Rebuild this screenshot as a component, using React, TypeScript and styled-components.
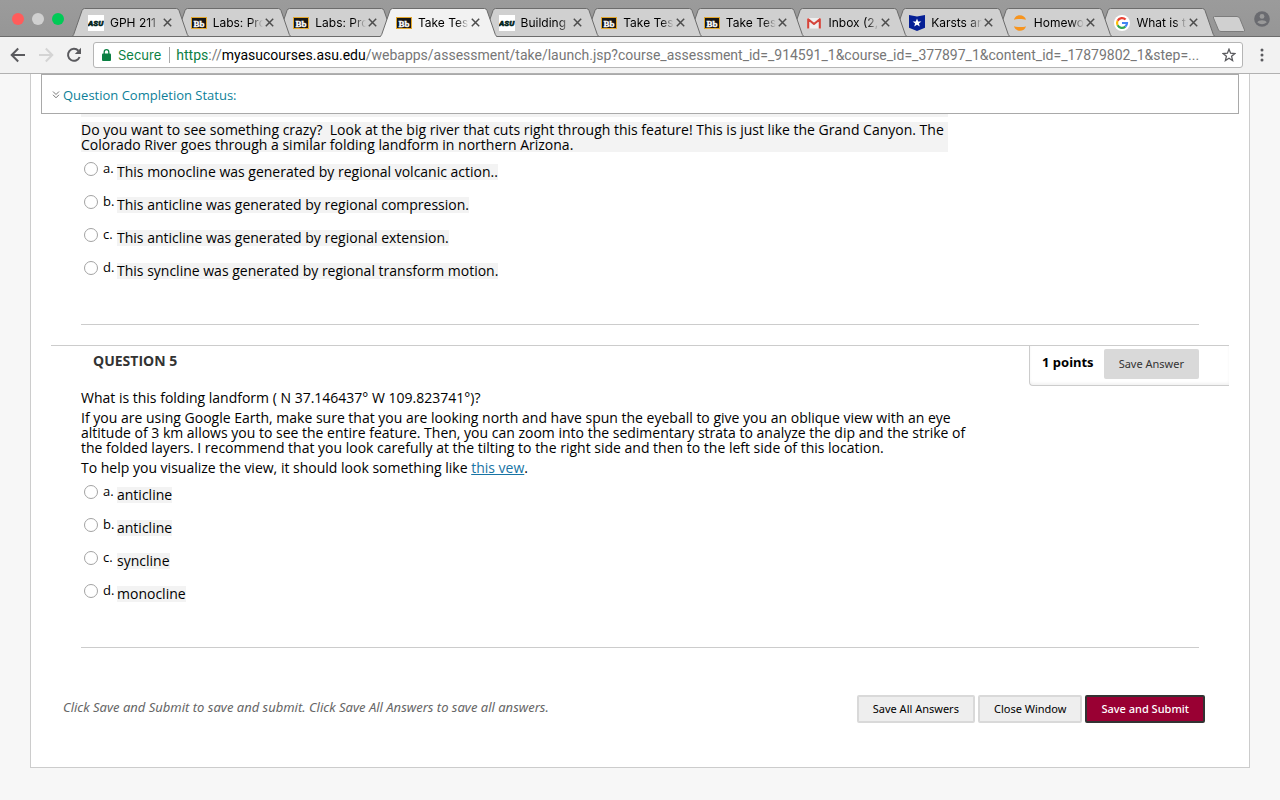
import React from "react";
import styled, { createGlobalStyle } from "styled-components";

const Global = createGlobalStyle`
  * { box-sizing: border-box; }
  body {
    margin: 0;
    background: #f7f7f7;
    color: #000;
    font-family: "Open Sans", "Noto Sans", sans-serif;
    font-size: 14px;
  }
  button { font-family: "Noto Sans", sans-serif; cursor: pointer; }
`;

const ui = `"Inter", "Roboto", sans-serif`;

/* ---------- Browser frame ---------- */

const TabStrip = styled.header`
  display: flex;
  align-items: flex-end;
  height: 37px;
  padding: 0 10px 0 12px;
  background: linear-gradient(#9b9b9b, #969696);
  box-shadow: inset 0 -1px 0 #6c6c6c;
  font-family: ${ui};
`;

const WindowButtons = styled.div`
  display: flex;
  gap: 8px;
  height: 37px;
  padding-top: 13px;
  margin-right: 8px;
  flex: none;
`;

const Dot = styled.button<{ $color: string }>`
  width: 12px;
  height: 12px;
  padding: 0;
  border: 0;
  border-radius: 50%;
  background: ${(p) => p.$color};
`;

const TabList = styled.nav`
  display: flex;
  flex: 1;
  min-width: 0;
`;

const TabItem = styled.div<{ $active?: boolean; $level: number }>`
  display: flex;
  position: relative;
  z-index: ${(p) => p.$level};
  flex: 1 1 0;
  min-width: 0;
  height: 29px;
  color: ${(p) => (p.$active ? "#f2f2f2" : "#d0d0d0")};
  &:not(:first-child) { margin-left: -14px; }
`;

const Edge = styled.svg`
  display: block;
  flex: none;
  width: 14px;
  height: 29px;
`;

const TabBody = styled.div<{ $active?: boolean }>`
  display: flex;
  align-items: center;
  flex: 1;
  min-width: 0;
  padding: 0 3px 0 2px;
  background: currentColor;
  border-top: 1px solid #6c6c6c;
  border-bottom: 1px solid ${(p) => (p.$active ? "#f2f2f2" : "#6c6c6c")};
`;

const Favicon = styled.svg`
  flex: none;
  width: 16px;
  height: 16px;
`;

const TabTitle = styled.a`
  flex: 1;
  min-width: 0;
  margin: 0 2px 0 6px;
  overflow: hidden;
  white-space: nowrap;
  color: #000;
  font-size: 12px;
  line-height: 18px;
  text-decoration: none;
  mask-image: linear-gradient(to right, #000 75%, transparent 100%);
`;

const IconButton = styled.button`
  display: flex;
  flex: none;
  padding: 0;
  border: 0;
  background: none;
`;

const NewTab = styled(IconButton)`
  align-self: flex-start;
  padding-top: 16px;
  margin-left: -3px;
`;

const Profile = styled(IconButton)`
  align-self: flex-start;
  padding-top: 11px;
  margin-left: 8px;
`;

const Toolbar = styled.div`
  display: flex;
  align-items: center;
  height: 37px;
  padding: 0 13px 0 10px;
  background: #f2f2f2;
  border-bottom: 1px solid #b1b1b1;
`;

const NavButtons = styled.div`
  display: flex;
  gap: 12px;
  margin-right: 11px;
`;

const AddressBar = styled.div`
  display: flex;
  align-items: center;
  flex: 1;
  min-width: 0;
  height: 26px;
  padding: 0 6px 0 8px;
  margin-right: 15px;
  background: #fff;
  border: 1px solid #b5b5b5;
  border-radius: 3px;
  font-family: "Roboto", sans-serif;
  font-size: 14px;
  line-height: 20px;
`;

const Secure = styled.span`
  flex: none;
  padding: 0 8px 0 7px;
  margin-right: 6px;
  border-right: 1px solid #aaa;
  color: #0b8043;
  font-family: ${ui};
  font-size: 13px;
  line-height: 16px;
`;

const Url = styled.div`
  flex: 1;
  min-width: 0;
  margin-right: 10px;
  overflow: hidden;
  white-space: nowrap;
  text-overflow: ellipsis;
  color: #777;
`;

const Scheme = styled.span`color: #0b8043;`;
const Host = styled.span`color: #000;`;

/* ---------- Assessment page ---------- */

const Panel = styled.main`
  margin: 0 30px 32px;
  padding: 0 10px 44px;
  background: #fff;
  border: 1px solid #ccc;
  border-top: 0;
`;

const StatusBar = styled.div`
  display: flex;
  align-items: center;
  height: 40px;
  padding: 2px 10px 0;
  border: 1px solid #a9a9a9;
  background: #fff;
`;

const StatusToggle = styled.button`
  display: flex;
  align-items: center;
  gap: 3px;
  padding: 0;
  border: 0;
  background: none;
  color: #0d7f99;
  font-family: "Open Sans", sans-serif;
  font-size: 13px;
  line-height: 18px;
`;

const QuestionBody = styled.div`
  padding: 0 30px 0 40px;
  margin-right: 10px;
`;

const ScrolledLine = styled.div`
  max-width: 867px;
  height: 3px;
  margin-bottom: 5px;
  background: #f3f3f3;
`;

const Text = styled.p`
  max-width: 900px;
  margin: 0 0 5px;
  line-height: 15px;
  &:last-of-type { margin-bottom: 0; }
`;

const ShadedText = styled(Text)`
  max-width: 867px;
  background: #f3f3f3;
`;

const TextLink = styled.a`color: #1874a4;`;

const Answers = styled.ul`
  margin: 0;
  padding: 10px 0 0;
  list-style: none;
`;

const Answer = styled.li`
  display: flex;
  align-items: flex-start;
  height: 33px;
`;

const Radio = styled.input`
  appearance: none;
  flex: none;
  width: 14px;
  height: 14px;
  margin: 0 5px 0 3px;
  border: 1px solid #a3a3a3;
  border-radius: 50%;
  background: #fff;
`;

const Letter = styled.span`
  flex: none;
  width: 14px;
  font-size: 13px;
  line-height: 12px;
`;

const Choice = styled.label`
  margin-top: 2px;
  background: #f3f3f3;
  line-height: 16px;
`;

const Rule = styled.hr`
  height: 1px;
  margin: 30px 0 20px;
  border: 0;
  background: #ccc;
`;

const QuestionHead = styled.div`
  display: flex;
  justify-content: space-between;
  align-items: flex-start;
  margin: 0 10px 4px;
  border-top: 1px solid #ccc;
`;

const QuestionTitle = styled.h3`
  margin: 6px 0 0 42px;
  color: #333;
  font-size: 14px;
  line-height: 18px;
`;

const Points = styled.div`
  display: flex;
  align-items: flex-start;
  gap: 10px;
  height: 40px;
  padding: 3px 30px 0 12px;
  border: solid #ccc;
  border-width: 0 0 1px 1px;
  border-bottom-left-radius: 4px;
  box-shadow: inset 0 -2px 3px #f3f3f3;
  font-family: "Noto Sans", sans-serif;
  font-size: 13px;
  font-weight: 700;
  line-height: 26px;
`;

const SaveAnswer = styled.button`
  height: 30px;
  padding: 0 15px 2px;
  border: 0;
  border-radius: 2px;
  background: #d9d9d9;
  color: #333;
  font-size: 11px;
`;

const Footer = styled.div`
  display: flex;
  align-items: center;
  justify-content: space-between;
  margin: 47px 34px 0 22px;
`;

const Hint = styled.p`
  margin: 0 0 4px;
  color: #666;
  font-family: "Noto Sans", sans-serif;
  font-size: 13px;
  font-style: italic;
  line-height: 20px;
`;

const Actions = styled.div`
  display: flex;
  gap: 3px;
`;

const Action = styled.button<{ $primary?: boolean }>`
  height: 28px;
  padding: 0 14px 2px;
  border: 2px solid ${(p) => (p.$primary ? "#333" : "#d9d9d9")};
  border-radius: 2px;
  background: ${(p) => (p.$primary ? "#990033" : "#eee")};
  color: ${(p) => (p.$primary ? "#fff" : "#000")};
  font-size: 11px;
  font-weight: ${(p) => (p.$primary ? 500 : 400)};
  white-space: nowrap;
`;

/* ---------- Favicons ---------- */

const Asu = () => (
  <Favicon viewBox="0 0 16 16">
    <rect width="16" height="16" fill="#fff" />
    <text x="0" y="11" fontSize="8" fontWeight="900" fontStyle="italic" fontFamily="Roboto, sans-serif" fill="#00231a" stroke="#00231a" strokeWidth=".5">ASU</text>
  </Favicon>
);
const Bb = () => (
  <Favicon viewBox="0 0 16 16">
    <rect x=".5" y="2.5" width="15" height="11" fill="#161616" stroke="#e3a72b" />
    <text x="2.5" y="11.5" fontSize="9" fontWeight="700" fontFamily="Liberation Serif, serif" fill="#fff" stroke="#fff" strokeWidth=".3">Bb</text>
  </Favicon>
);
const Gmail = () => (
  <Favicon viewBox="0 0 16 16">
    <rect x="1.5" y="3" width="13" height="10.5" fill="#efefef" />
    <path d="M2.2 13.6V4.2L8 9l5.8-4.8v9.4" fill="none" stroke="#d5443a" strokeWidth="2.1" strokeLinejoin="round" />
  </Favicon>
);
const Shield = () => (
  <Favicon viewBox="0 0 16 16">
    <path d="M0 0l8 1.6L16 0v12.8L8 16l-8-3.2z" fill="#051f95" />
    <path d="M8 3.4l1.2 3h3.2L9.9 8.4l.9 3.2L8 9.7l-2.8 1.9.9-3.2-2.5-2h3.2z" fill="#fff" />
  </Favicon>
);
const Jupyter = () => (
  <Favicon viewBox="0 0 16 16">
    <path d="M2 4.8C3.4-1.2 12.6-1.2 14 4.8 10.8 3.6 5.2 3.6 2 4.8z M2 11.2C3.4 17.2 12.6 17.2 14 11.2 10.8 12.4 5.2 12.4 2 11.2z" fill="#f7941e" />
  </Favicon>
);
const Google = () => (
  <Favicon viewBox="0 0 16 16">
    <circle cx="8" cy="8" r="8" fill="#fff" />
    <g fill="none" strokeWidth="2.2">
      <path d="M11.6 4.6A5 5 0 0 0 3.6 5.7" stroke="#ea4335" />
      <path d="M3.6 5.7a5 5 0 0 0 0 4.6" stroke="#fbbc05" />
      <path d="M3.6 10.3a5 5 0 0 0 7.7 1.4" stroke="#34a853" />
      <path d="M11.3 11.7A5 5 0 0 0 13 8H8" stroke="#4285f4" />
    </g>
  </Favicon>
);

const tabs: { icon: React.FC; title: string; active?: boolean }[] = [
  { icon: Asu, title: "GPH 211" },
  { icon: Bb, title: "Labs: Pro" },
  { icon: Bb, title: "Labs: Pro" },
  { icon: Bb, title: "Take Test", active: true },
  { icon: Asu, title: "Building" },
  { icon: Bb, title: "Take Test" },
  { icon: Bb, title: "Take Test" },
  { icon: Gmail, title: "Inbox (2," },
  { icon: Shield, title: "Karsts an" },
  { icon: Jupyter, title: "Homewo" },
  { icon: Google, title: "What is t" },
];

const Tab = ({ icon: Icon, title, active, level }: { icon: React.FC; title: string; active?: boolean; level: number }) => (
  <TabItem $active={active} $level={active ? 20 : level}>
    <Edge viewBox="0 0 14 29">
      <path d="M0 29L1.5 27 10 2.5Q10.8.5 12.5.5H14V29z" fill="currentColor" />
      <path d="M0 28.5Q1.2 28 1.7 26.5L10 2.5Q10.8.5 12.5.5H14" fill="none" stroke="#6c6c6c" />
      {!active && <path d="M0 28.5H14" stroke="#6c6c6c" />}
    </Edge>
    <TabBody $active={active}>
      <Icon />
      <TabTitle href="#">{title}</TabTitle>
      <IconButton aria-label="Close tab">
        <svg width="9" height="9" viewBox="0 0 9 9">
          <path d="M.8.8l7.4 7.4M8.2.8L.8 8.2" stroke="#4d4d4d" strokeWidth="1.5" />
        </svg>
      </IconButton>
    </TabBody>
    <Edge viewBox="0 0 14 29">
      <path d="M14 29L12.5 27 4 2.5Q3.2.5 1.5.5H0V29z" fill="currentColor" />
      <path d="M14 28.5Q12.8 28 12.3 26.5L4 2.5Q3.2.5 1.5.5H0" fill="none" stroke="#6c6c6c" />
      {!active && <path d="M0 28.5H14" stroke="#6c6c6c" />}
    </Edge>
  </TabItem>
);

const AnswerList = ({ name, choices }: { name: string; choices: string[] }) => (
  <Answers>
    {choices.map((choice, i) => (
      <Answer key={i}>
        <Radio type="radio" name={name} id={`${name}-${i}`} />
        <Letter>{"abcd"[i]}.</Letter>
        <Choice htmlFor={`${name}-${i}`}>{choice}</Choice>
      </Answer>
    ))}
  </Answers>
);

export default function App() {
  return (
    <>
      <Global />
      <TabStrip>
        <WindowButtons>
          <Dot $color="#ff5c5b" aria-label="Close" />
          <Dot $color="#d0d0d0" aria-label="Minimize" />
          <Dot $color="#00ca56" aria-label="Zoom" />
        </WindowButtons>
        <TabList>
          {tabs.map((t, i) => (
            <Tab key={i} {...t} level={tabs.length - i} />
          ))}
        </TabList>
        <NewTab aria-label="New tab">
          <svg width="34" height="17" viewBox="0 0 34 17">
            <path d="M2.5.5H25Q27 .5 27.8 2.5L32.5 14Q33 15.5 31.5 15.5H9Q7.2 15.5 6.5 14L1.5 2Q1 .5 2.5.5z" fill="#d0d0d0" stroke="#7c7c7c" />
          </svg>
        </NewTab>
        <Profile aria-label="Profile">
          <svg width="16" height="16" viewBox="0 0 16 16">
            <circle cx="8" cy="8" r="7.8" fill="#6a6b70" />
            <circle cx="8" cy="5.4" r="2.4" fill="#999" />
            <path d="M3.3 11.5C4.2 8.5 11.8 8.5 12.7 11.5Q8 15 3.3 11.5z" fill="#999" />
          </svg>
        </Profile>
      </TabStrip>
      <Toolbar>
        <NavButtons>
          <IconButton aria-label="Back">
            <svg width="16" height="16" viewBox="0 0 16 16">
              <path d="M15 8H2.5M8.2 1.5L1.7 8l6.5 6.5" fill="none" stroke="#5a5a5e" strokeWidth="2" />
            </svg>
          </IconButton>
          <IconButton aria-label="Forward" disabled>
            <svg width="16" height="16" viewBox="0 0 16 16">
              <path d="M1 8h12.5M7.8 1.5L14.3 8l-6.5 6.5" fill="none" stroke="#d4d4d4" strokeWidth="2" />
            </svg>
          </IconButton>
          <IconButton aria-label="Reload">
            <svg width="16" height="16" viewBox="0 0 16 16">
              <path d="M13.6 10A6 6 0 1 1 12.4 3.7" fill="none" stroke="#5a5a5e" strokeWidth="2" />
              <path d="M15 .8V7H8.8z" fill="#5a5a5e" />
            </svg>
          </IconButton>
        </NavButtons>
        <AddressBar>
          <svg width="9" height="12" viewBox="0 0 9 12">
            <rect y="4.5" width="9" height="7.5" rx="1" fill="#0b8043" />
            <path d="M2.2 5V3a2.3 2.3 0 0 1 4.6 0v2" fill="none" stroke="#0b8043" strokeWidth="1.3" />
          </svg>
          <Secure>Secure</Secure>
          <Url>
            <Scheme>https</Scheme>://<Host>myasucourses.asu.edu</Host>
            /webapps/assessment/take/launch.jsp?course_assessment_id=_914591_1&amp;course_id=_377897_1&amp;content_id=_17879802_1&amp;step=...
          </Url>
          <IconButton aria-label="Bookmark this page">
            <svg width="14" height="14" viewBox="0 0 14 14">
              <path d="M7 1.2l1.6 4 4.3.3-3.3 2.8 1 4.2L7 10.2l-3.6 2.3 1-4.2L1.1 5.5l4.3-.3z" fill="none" stroke="#5a5a5e" strokeWidth="1.3" />
            </svg>
          </IconButton>
        </AddressBar>
        <IconButton aria-label="Menu">
          <svg width="9" height="14" viewBox="0 0 9 14" fill="#5a5a5e">
            <circle cx="4" cy="2" r="1.5" />
            <circle cx="4" cy="7" r="1.5" />
            <circle cx="4" cy="12" r="1.5" />
          </svg>
        </IconButton>
      </Toolbar>

      <Panel>
        <StatusBar>
          <StatusToggle>
            <svg width="8" height="8" viewBox="0 0 8 8" fill="none" stroke="#777">
              <path d="M1 .5l3 3 3-3M1 3.8l3 3 3-3" />
            </svg>
            Question Completion Status:
          </StatusToggle>
        </StatusBar>

        <QuestionBody>
          <ScrolledLine />
          <ShadedText>
            Do you want to see something crazy?&nbsp; Look at the big river that cuts right through this feature! This is just like the Grand Canyon. The
            <br />
            Colorado River goes through a similar folding landform in northern Arizona.
          </ShadedText>
          <AnswerList
            name="question4"
            choices={[
              "This monocline was generated by regional volcanic action..",
              "This anticline was generated by regional compression.",
              "This anticline was generated by regional extension.",
              "This syncline was generated by regional transform motion.",
            ]}
          />
          <Rule />
        </QuestionBody>

        <QuestionHead>
          <QuestionTitle>QUESTION 5</QuestionTitle>
          <Points>
            1 points
            <SaveAnswer>Save Answer</SaveAnswer>
          </Points>
        </QuestionHead>
        <QuestionBody>
          <Text>What is this folding landform ( N 37.146437° W 109.823741°)?</Text>
          <Text>
            If you are using Google Earth, make sure that you are looking north and have spun the eyeball to give you an oblique view with an eye
            <br />
            altitude of 3 km allows you to see the entire feature. Then, you can zoom into the sedimentary strata to analyze the dip and the strike of
            <br />
            the folded layers. I recommend that you look carefully at the tilting to the right side and then to the left side of this location.
          </Text>
          <Text>
            To help you visualize the view, it should look something like <TextLink href="#">this vew</TextLink>.
          </Text>
          <AnswerList name="question5" choices={["anticline", "anticline", "syncline", "monocline"]} />
          <Rule />
        </QuestionBody>

        <Footer>
          <Hint>Click Save and Submit to save and submit. Click Save All Answers to save all answers.</Hint>
          <Actions>
            <Action>Save All Answers</Action>
            <Action>Close Window</Action>
            <Action $primary>Save and Submit</Action>
          </Actions>
        </Footer>
      </Panel>
    </>
  );
}
